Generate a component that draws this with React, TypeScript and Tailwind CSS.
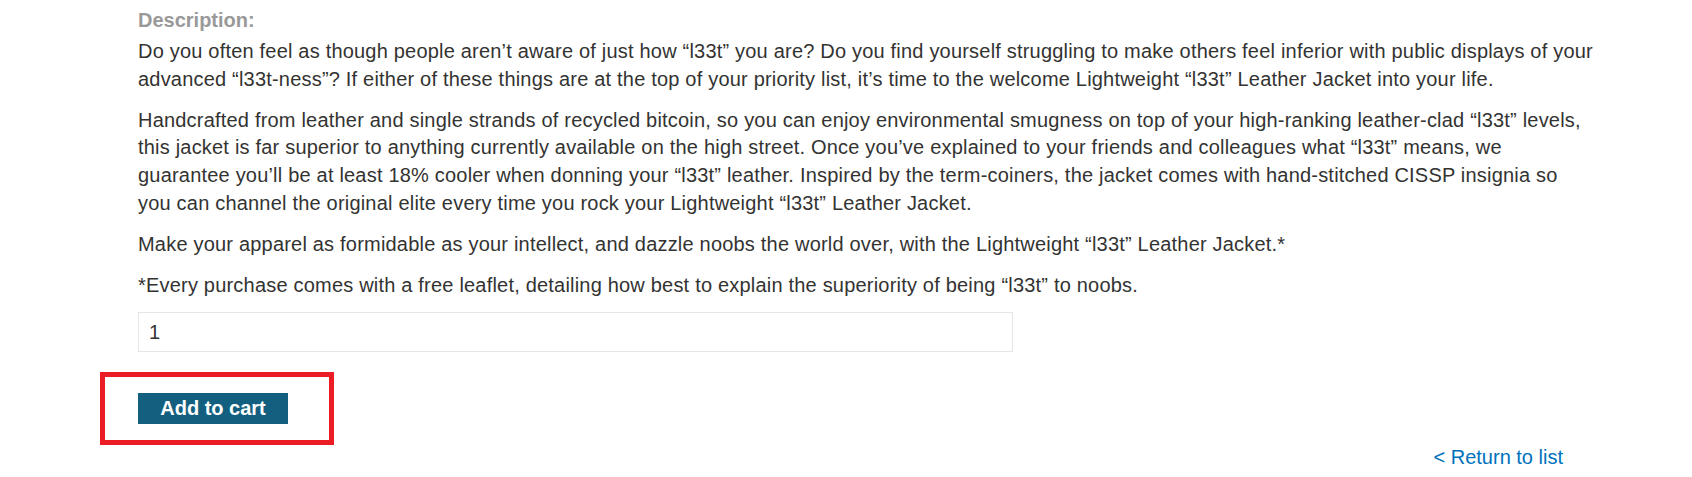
import React from "react";

// Lines are kept as they break in the product page at this width.
const paragraphs: string[][] = [
  [
    "Do you often feel as though people aren’t aware of just how “l33t” you are? Do you find yourself struggling to make others feel inferior with public displays of your",
    "advanced “l33t-ness”? If either of these things are at the top of your priority list, it’s time to the welcome Lightweight “l33t” Leather Jacket into your life.",
  ],
  [
    "Handcrafted from leather and single strands of recycled bitcoin, so you can enjoy environmental smugness on top of your high-ranking leather-clad “l33t” levels,",
    "this jacket is far superior to anything currently available on the high street. Once you’ve explained to your friends and colleagues what “l33t” means, we",
    "guarantee you’ll be at least 18% cooler when donning your “l33t” leather. Inspired by the term-coiners, the jacket comes with hand-stitched CISSP insignia so",
    "you can channel the original elite every time you rock your Lightweight “l33t” Leather Jacket.",
  ],
  [
    "Make your apparel as formidable as your intellect, and dazzle noobs the world over, with the Lightweight “l33t” Leather Jacket.*",
  ],
  [
    "*Every purchase comes with a free leaflet, detailing how best to explain the superiority of being “l33t” to noobs.",
  ],
];

export default function App() {
  return (
    <div className="h-[477px] w-[1692px] overflow-hidden bg-white font-['Liberation_Sans',Arial,sans-serif] text-[20px] leading-[27.6px] text-[#333332]">
      <div className="ml-[138px] w-[1425px] pt-[7px]">
        <div className="font-bold text-[#999999]">Description:</div>
        <div className="mt-[3.4px] tracking-[0.2px]">
          {paragraphs.map((lines, i) => (
            <p key={i} className="mb-[13.6px] whitespace-nowrap">
              {lines.map((line, j) => (
                <React.Fragment key={j}>
                  {j > 0 && <br />}
                  {line}
                </React.Fragment>
              ))}
            </p>
          ))}
        </div>

        <input
          defaultValue="1"
          className="mt-[-1px] block h-[40px] w-[875px] border border-[#e6e6e6] px-[10px] text-[20px] text-[#333332] outline-none"
        />

        <div className="relative mt-[41px] w-fit">
          <button className="block h-[31px] w-[150px] bg-[#135f80] text-center font-bold leading-[31px] text-white">
            Add to cart
          </button>
          {/* annotation box around the button */}
          <div className="pointer-events-none absolute left-[-38px] top-[-21px] h-[73px] w-[234px] border-[5px] border-[#ec1c24]" />
        </div>

        <div className="mt-[19.5px] text-right">
          <a href="#" className="text-[#0071bc]">
            &lt; Return to list
          </a>
        </div>
      </div>
    </div>
  );
}
